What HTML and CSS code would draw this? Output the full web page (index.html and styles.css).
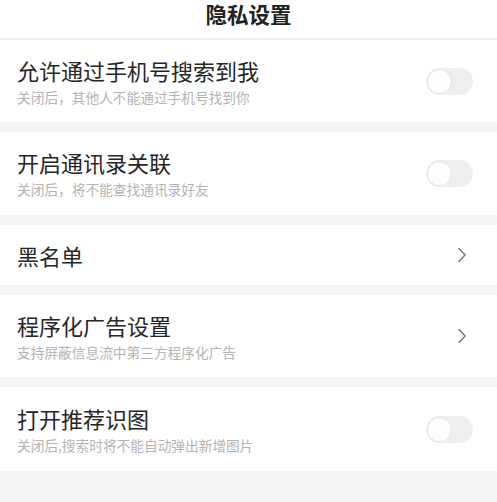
FILE: index.html
```html
<!DOCTYPE html>
<html lang="zh-CN">
<head>
<meta charset="utf-8">
<title>隐私设置</title>
<link rel="stylesheet" href="styles.css">
</head>
<body>
<div class="page">
  <header class="topbar"><h1 class="topbar-title">隐私设置</h1></header>
  <div class="list">
    <div class="item item-sub">
      <div class="item-text">
        <div class="item-title">允许通过手机号搜索到我</div>
        <div class="item-desc">关闭后，其他人不能通过手机号找到你</div>
      </div>
      <span class="toggle"><span class="knob"></span></span>
    </div>
    <div class="item item-sub item-2">
      <div class="item-text">
        <div class="item-title">开启通讯录关联</div>
        <div class="item-desc">关闭后，将不能查找通讯录好友</div>
      </div>
      <span class="toggle"><span class="knob"></span></span>
    </div>
    <div class="item item-plain">
      <div class="item-text">
        <div class="item-title">黑名单</div>
      </div>
      <svg class="chev" width="10" height="16" viewBox="0 0 10 16"><path d="M2 1.5 L8 8 L2 14.5" fill="none" stroke="#7a7a7a" stroke-width="1.6" stroke-linecap="round" stroke-linejoin="round"/></svg>
    </div>
    <div class="item item-sub">
      <div class="item-text">
        <div class="item-title">程序化广告设置</div>
        <div class="item-desc">支持屏蔽信息流中第三方程序化广告</div>
      </div>
      <svg class="chev" width="10" height="16" viewBox="0 0 10 16"><path d="M2 1.5 L8 8 L2 14.5" fill="none" stroke="#7a7a7a" stroke-width="1.6" stroke-linecap="round" stroke-linejoin="round"/></svg>
    </div>
    <div class="item item-sub item-5">
      <div class="item-text">
        <div class="item-title">打开推荐识图</div>
        <div class="item-desc">关闭后,搜索时将不能自动弹出新增图片</div>
      </div>
      <span class="toggle"><span class="knob"></span></span>
    </div>
  </div>
</div>
</body>
</html>
```

FILE: styles.css
```css
* { box-sizing: border-box; }
html, body { margin: 0; padding: 0; }
body {
  background: #f5f5f5;
  font-family: "Noto Sans CJK SC", "Noto Sans", sans-serif;
  color: #2b2b2b;
}
.page { width: 497px; min-height: 502px; background: #f5f5f5; }
.topbar {
  height: 38px;
  background: #fff;
  border-bottom: 2px solid #f1f1f1;
  display: flex;
  align-items: flex-start;
  justify-content: center;
  box-sizing: content-box;
}
.topbar-title {
  margin: 0;
  padding: 0 4px;
  font-size: 21.5px;
  font-weight: 700;
  line-height: 27px;
  color: #222;
  white-space: nowrap;
}
.list { display: flex; flex-direction: column; gap: 10px; }
.item {
  background: #fff;
  display: flex;
  align-items: center;
  justify-content: space-between;
  padding: 0 24px 0 17px;
}
.item-sub { height: 82px; }
.item-2 { height: 83px; }
.item-5 { height: 84px; }
.item-plain { height: 60px; }
.item-text { display: flex; flex-direction: column; }
.item-title {
  font-size: 22px;
  line-height: 26px;
  color: #262626;
}
.item-desc {
  margin-top: 5px;
  font-size: 13.7px;
  line-height: 18px;
  color: #b3b3b3;
}
.toggle {
  width: 47px;
  height: 27px;
  border-radius: 14px;
  background: #eeeeee;
  display: flex;
  align-items: center;
  padding: 0 2px;
}
.knob {
  width: 23px;
  height: 23px;
  border-radius: 50%;
  background: #fdfdfd;
  box-shadow: 0 0 2px rgba(0,0,0,0.12);
}
.chev { margin-right: 6px; }
```
